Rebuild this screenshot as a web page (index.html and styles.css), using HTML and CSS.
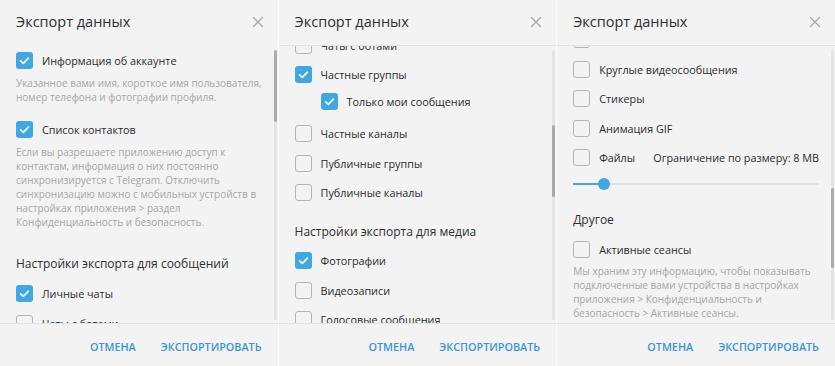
FILE: index.html
```html
<!DOCTYPE html>
<html lang="ru">
<head>
    <meta charset="UTF-8">
    <meta name="viewport" content="width=device-width, initial-scale=1.0">
    <title>Экспорт данных</title>
    <link rel="stylesheet" href="styles.css">
</head>
<body>
    <div class="screens" id="screens"></div>

    <script>
        // Same box content in all three captures, only scrolled differently
        const items = [
            { type: "check", text: "Информация об аккаунте", on: true },
            { type: "desc", text: "Указанное вами имя, короткое имя пользователя,\nномер телефона и фотографии профиля." },
            { type: "check", text: "Список контактов", on: true },
            { type: "desc", text: "Если вы разрешаете приложению доступ к\nконтактам, информация о них постоянно\nсинхронизируется с Telegram. Отключить\nсинхронизацию можно с мобильных устройств в\nнастройках приложения > раздел\nКонфиденциальность и безопасность." },
            { type: "section", text: "Настройки экспорта для сообщений" },
            { type: "check", text: "Личные чаты", on: true },
            { type: "check", text: "Чаты с ботами" },
            { type: "check", text: "Частные группы", on: true },
            { type: "check", text: "Только мои сообщения", on: true, sub: true },
            { type: "check", text: "Частные каналы" },
            { type: "check", text: "Публичные группы" },
            { type: "check", text: "Публичные каналы" },
            { type: "section", text: "Настройки экспорта для медиа" },
            { type: "check", text: "Фотографии", on: true },
            { type: "check", text: "Видеозаписи" },
            { type: "check", text: "Голосовые сообщения" },
            { type: "check", text: "Круглые видеосообщения" },
            { type: "check", text: "Стикеры" },
            { type: "check", text: "Анимация GIF" },
            { type: "check", text: "Файлы", extra: "Ограничение по размеру: 8 MB" },
            { type: "slider", value: 31 },
            { type: "section", text: "Другое" },
            { type: "check", text: "Активные сеансы" },
            { type: "desc", text: "Мы храним эту информацию, чтобы показывать\nподключенные вами устройства в настройках\nприложения > Конфиденциальность и\nбезопасность > Активные сеансы." }
        ];

        // scroll offset of each capture and its scrollbar thumb
        const screens = [
            { scroll: 0, thumbTop: 4, thumbHeight: 72 },
            { scroll: 278, thumbTop: 79, thumbHeight: 72 },
            { scroll: 558, thumbTop: 142, thumbHeight: 80 }
        ];

        const checkMark = `<svg viewBox="0 0 17 17" width="17" height="17"><path d="M4.6 8.8 L7.4 11.4 L12.4 6.1" fill="none" stroke="#fff" stroke-width="1.6" stroke-linecap="round" stroke-linejoin="round"/></svg>`;

        function renderItem(item) {
            if (item.type === "desc") {
                return `<p class="desc">${item.text}</p>`;
            }
            if (item.type === "section") {
                return `<h2 class="section">${item.text}</h2>`;
            }
            if (item.type === "slider") {
                return `<div class="slider">
                    <div class="slider-fill" style="width: ${item.value}px"></div>
                    <div class="slider-knob" style="left: ${item.value - 6}px"></div>
                </div>`;
            }
            const extra = item.extra ? `<span class="opt-extra">${item.extra}</span>` : "";
            return `<label class="opt${item.sub ? " sub" : ""}">
                <span class="check${item.on ? " on" : ""}">${item.on ? checkMark : ""}</span>
                <span class="opt-text">${item.text}</span>${extra}
            </label>`;
        }

        function renderBox(screen) {
            return `<section class="box${screen.scroll > 0 ? " scrolled" : ""}">
                <header class="box-head">
                    <h1>Экспорт данных</h1>
                    <button class="close" aria-label="Закрыть">
                        <svg viewBox="0 0 12 12" width="12" height="12"><path d="M1.5 1.5 L10.5 10.5 M10.5 1.5 L1.5 10.5" stroke="#a8a8a8" stroke-width="1.3" stroke-linecap="round"/></svg>
                    </button>
                </header>
                <div class="box-body">
                    <div class="list">${items.map(renderItem).join("")}</div>
                    <div class="scrollbar">
                        <div class="thumb" style="top: ${screen.thumbTop - 4}px; height: ${screen.thumbHeight}px"></div>
                    </div>
                </div>
                <footer class="box-foot">
                    <button>Отмена</button>
                    <button>Экспортировать</button>
                </footer>
            </section>`;
        }

        document.getElementById("screens").innerHTML = screens.map(renderBox).join("");

        document.querySelectorAll(".list").forEach((list, i) => {
            list.scrollTop = screens[i].scroll;

            // rows scrolled completely out of view are not painted
            const view = list.getBoundingClientRect();
            Array.from(list.children).forEach((row) => {
                const r = row.getBoundingClientRect();
                if (r.bottom <= view.top || r.top >= view.bottom) {
                    row.classList.add("offscreen");
                }
            });
        });
    </script>
</body>
</html>
```

FILE: styles.css
```css
* {
    box-sizing: border-box;
}

body {
    margin: 0;
    background-color: #fbfbfb;
    font-family: "Open Sans", "DejaVu Sans", sans-serif;
    color: #333;
}

.screens {
    display: flex;
    gap: 1px;
    height: 366px;
}

.box {
    flex: 0 0 277px;
    display: flex;
    flex-direction: column;
    height: 366px;
    background-color: #f3f3f3;
}

.box:last-child {
    flex: 1 1 auto;
}

.box-head {
    height: 46px;
    display: flex;
    align-items: center;
    justify-content: space-between;
    padding: 0 10px 2px 16px;
    border-bottom: 1px solid transparent;
}

.box.scrolled .box-head {
    border-bottom-color: #e3e3e3;
}

.box-head h1 {
    margin: 0;
    font-size: 14.5px;
    font-weight: 400;
    color: #2f2f2f;
}

.close {
    width: 20px;
    height: 20px;
    padding: 0;
    border: none;
    background: none;
    display: flex;
    align-items: center;
    justify-content: center;
}

.box-body {
    position: relative;
    flex: 1;
    overflow: hidden;
}

.list {
    height: 100%;
    overflow-y: auto;
    scrollbar-width: none;
}

.list::-webkit-scrollbar {
    display: none;
}

.offscreen {
    visibility: hidden;
}

/* scrollbar drawn over the list */
.scrollbar {
    position: absolute;
    top: 4px;
    bottom: 3px;
    right: 1px;
    width: 3px;
    border-radius: 2px;
    background-color: #e4e4e4;
}

.thumb {
    position: absolute;
    left: 0;
    width: 3px;
    border-radius: 2px;
    background-color: #ababab;
}

.opt {
    display: flex;
    align-items: center;
    height: 29.5px;
    padding: 0 16px;
    font-size: 10.8px;
    color: #2b2b2b;
    white-space: nowrap;
}

.opt.sub {
    padding-left: 42px;
    margin-top: -3px;
    margin-bottom: 3px;
}

.check {
    flex: 0 0 17px;
    width: 17px;
    height: 17px;
    margin-right: 9px;
    border: 1.6px solid #b4b4b4;
    border-radius: 3px;
    display: flex;
}

.check.on {
    border: none;
    background-color: #40a7e3;
}

.opt-extra {
    margin-left: auto;
}

.desc {
    margin: 0 0 11.5px;
    padding: 0 16px;
    font-size: 10px;
    line-height: 14px;
    color: #a6a6a6;
    white-space: pre;
}

.section {
    margin: 0;
    padding: 13.25px 16px 3.5px;
    font-size: 12px;
    font-weight: 400;
    line-height: 22px;
    color: #2f2f2f;
}

.slider {
    position: relative;
    height: 23px;
    margin: 0 16px;
    display: flex;
    align-items: center;
}

.slider::before {
    content: "";
    flex: 1;
    height: 2px;
    background-color: #dde4ea;
}

.slider-fill {
    position: absolute;
    left: 0;
    top: 10.5px;
    height: 2px;
    background-color: #40a7e3;
}

.slider-knob {
    position: absolute;
    top: 5.5px;
    width: 12px;
    height: 12px;
    border-radius: 50%;
    background-color: #40a7e3;
}

.box-foot {
    height: 43px;
    padding: 3px 16px 0;
    border-top: 1px solid #e3e3e3;
    display: flex;
    align-items: center;
    justify-content: flex-end;
    gap: 25px;
}

.box-foot button {
    padding: 0;
    border: none;
    background: none;
    font-family: "Open Sans", sans-serif;
    font-size: 10.8px;
    font-weight: 600;
    color: #3a96d8;
    text-transform: uppercase;
    cursor: pointer;
}
```
